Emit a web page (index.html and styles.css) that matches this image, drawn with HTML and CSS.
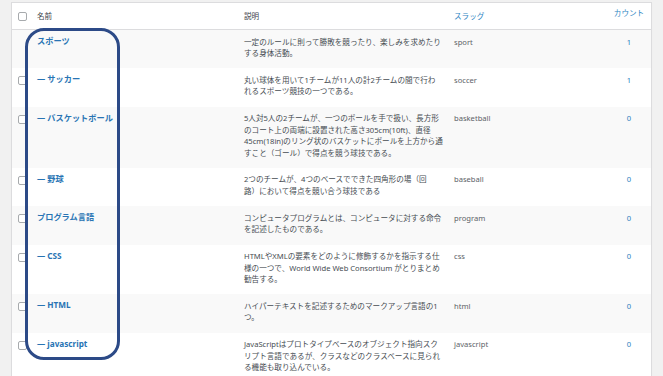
FILE: index.html
```html
<!DOCTYPE html>
<html lang="ja">
<head>
<meta charset="utf-8">
<title>カテゴリー</title>
<link rel="stylesheet" href="styles.css">
</head>
<body>
<div class="wrap">
  <table class="terms">
    <colgroup>
      <col class="c-check"><col class="c-name"><col class="c-desc"><col class="c-slug"><col class="c-count">
    </colgroup>
    <thead>
      <tr>
        <th class="check"><span class="cb"></span></th>
        <th class="h-plain">名前</th>
        <th class="h-plain">説明</th>
        <th class="h-link">スラッグ</th>
        <th class="h-link h-count">カウント</th>
      </tr>
    </thead>
    <tbody>
      <tr class="alt">
        <td class="check"></td>
        <td class="name"><a class="row-title">スポーツ</a><div class="ra"></div></td>
        <td class="desc">一定のルールに則って勝敗を競ったり、楽しみを求めたり<br>する身体活動。</td>
        <td class="slug">sport</td>
        <td class="count">1</td>
      </tr>
      <tr>
        <td class="check"><span class="cb"></span></td>
        <td class="name"><a class="row-title">— サッカー</a><div class="ra"></div></td>
        <td class="desc">丸い球体を用いて1チームが11人の計2チームの間で行わ<br>れるスポーツ競技の一つである。</td>
        <td class="slug">soccer</td>
        <td class="count">1</td>
      </tr>
      <tr class="alt">
        <td class="check"><span class="cb"></span></td>
        <td class="name"><a class="row-title">— バスケットボール</a><div class="ra"></div></td>
        <td class="desc">5人対5人の2チームが、一つのボールを手で扱い、長方形<br>のコート上の両端に設置された高さ305cm(10ft)、直径<br>45cm(18in)のリング状のバスケットにボールを上方から通<br>すこと（ゴール）で得点を競う球技である。</td>
        <td class="slug">basketball</td>
        <td class="count">0</td>
      </tr>
      <tr>
        <td class="check"><span class="cb"></span></td>
        <td class="name"><a class="row-title">— 野球</a><div class="ra"></div></td>
        <td class="desc">2つのチームが、4つのベースでできた四角形の場（回<br>路）において得点を競い合う球技である</td>
        <td class="slug">baseball</td>
        <td class="count">0</td>
      </tr>
      <tr class="alt">
        <td class="check"><span class="cb"></span></td>
        <td class="name"><a class="row-title">プログラム言語</a><div class="ra"></div></td>
        <td class="desc">コンピュータプログラムとは、コンピュータに対する命令<br>を記述したものである。</td>
        <td class="slug">program</td>
        <td class="count">0</td>
      </tr>
      <tr>
        <td class="check"><span class="cb"></span></td>
        <td class="name"><a class="row-title">— CSS</a><div class="ra"></div></td>
        <td class="desc">HTMLやXMLの要素をどのように修飾するかを指示する仕<br>様の一つで、World Wide Web Consortium がとりまとめ<br>勧告する。</td>
        <td class="slug">css</td>
        <td class="count">0</td>
      </tr>
      <tr class="alt">
        <td class="check"><span class="cb"></span></td>
        <td class="name"><a class="row-title">— HTML</a><div class="ra"></div></td>
        <td class="desc">ハイパーテキストを記述するためのマークアップ言語の1<br>つ。</td>
        <td class="slug">html</td>
        <td class="count">0</td>
      </tr>
      <tr>
        <td class="check"><span class="cb"></span></td>
        <td class="name"><a class="row-title">— javascript</a><div class="ra"></div></td>
        <td class="desc">JavaScriptはプロトタイプベースのオブジェクト指向スク<br>リプト言語であるが、クラスなどのクラスベースに見られ<br>る機能も取り込んでいる。</td>
        <td class="slug">javascript</td>
        <td class="count">0</td>
      </tr>
    </tbody>
  </table>
  <div class="highlight"></div>
</div>
</body>
</html>
```

FILE: styles.css
```css
html, body {
  margin: 0;
  padding: 0;
  overflow: hidden;
}
body {
  background: #f1f1f1;
  font-family: "Noto Sans", "Noto Sans CJK JP", sans-serif;
  color: #50575e;
}
.wrap {
  position: relative;
  padding: 2px 11px 0 11px;
}
.terms {
  width: 100%;
  table-layout: fixed;
  border-collapse: separate;
  border-spacing: 0;
  background: #fff;
  border: 1px solid #dcdcde;
  box-shadow: 0 1px 1px rgba(0,0,0,0.04);
}
.c-check { width: 19px; }
.c-name { width: 207px; }
.c-desc { width: 210px; }
.c-slug { width: 159px; }
.c-count { width: 44px; }

.terms th {
  height: 26px;
  padding: 0 6px;
  font-size: 7.6px;
  line-height: 9px;
  font-weight: normal;
  text-align: left;
  vertical-align: middle;
  border-bottom: 1px solid #dcdcde;
  white-space: nowrap;
}
.terms th.check { padding: 0 0 0 6px; }
.h-plain { color: #3c434a; }
.h-link { color: #2f86c3; }
.terms th.h-count {
  text-align: center;
  vertical-align: top;
  padding-top: 6px;
  height: 20px;
}

.cb {
  display: inline-block;
  width: 9px;
  height: 9px;
  box-sizing: border-box;
  border: 1px solid #a7aaad;
  border-radius: 2px;
  background: #fff;
  vertical-align: middle;
}

.terms td {
  vertical-align: top;
  padding: 6.5px 6px 9px;
  font-size: 7.6px;
  line-height: 11.4px;
  white-space: nowrap;
}
.terms tr.alt td { background: #f9f9f9; }
.terms td.check { padding: 8px 0 0 5.5px; line-height: 9px; }
.terms td.check .cb { vertical-align: top; }
.terms td.name { padding-top: 5px; }
.row-title {
  font-size: 8.2px;
  font-weight: bold;
  color: #2874b4;
  text-decoration: none;
}
.ra { height: 12px; }
.desc { color: #464c52; }
.slug { color: #5c6268; }
.count { text-align: center; color: #2a7fc0; }

.highlight {
  position: absolute;
  left: 25px;
  top: 28px;
  width: 95px;
  height: 332px;
  box-sizing: border-box;
  border: 3.5px solid #2c4a87;
  border-radius: 19px;
  pointer-events: none;
}
```
